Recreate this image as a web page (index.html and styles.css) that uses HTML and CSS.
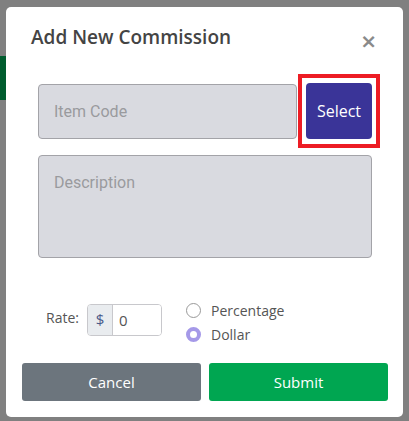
FILE: index.html
```html
<!DOCTYPE html>
<html lang="en">
<head>
    <meta charset="UTF-8">
    <meta name="viewport" content="width=device-width, initial-scale=1.0">
    <title>Add New Commission</title>
    <link rel="stylesheet" href="styles.css">
</head>
<body>
    <div class="backdrop">
        <div class="side-strip"></div>
        <div class="modal">
            <div class="modal-header">
                <h1>Add New Commission</h1>
                <span class="close">&times;</span>
            </div>
            <div class="modal-body">
                <div class="code-row">
                    <input type="text" class="field code-field" placeholder="Item Code">
                    <div class="highlight-box">
                        <button type="button" class="select-btn">Select</button>
                    </div>
                </div>
                <textarea class="field desc-field" placeholder="Description"></textarea>

                <div class="rate-row">
                    <label class="rate-label">Rate:</label>
                    <div class="input-group">
                        <span class="prefix">$</span>
                        <input type="text" class="rate-input" value="0">
                    </div>
                    <div class="radios">
                        <label class="radio"><span class="dot"></span>Percentage</label>
                        <label class="radio"><span class="dot checked"></span>Dollar</label>
                    </div>
                </div>
            </div>
            <div class="modal-footer">
                <button type="button" class="btn cancel">Cancel</button>
                <button type="button" class="btn submit">Submit</button>
            </div>
        </div>
    </div>
</body>
</html>
```

FILE: styles.css
```css
body {
    margin: 0;
    background-color: #808080;
    font-family: "Open Sans", "Liberation Sans", sans-serif;
}
.backdrop {
    position: relative;
    width: 409px;
    height: 421px;
    padding: 7px 6px 0 6px;
    box-sizing: border-box;
}
.side-strip {
    position: absolute;
    left: 0;
    top: 56px;
    width: 6px;
    height: 44px;
    background-color: #005c2e;
}
.modal {
    width: 397px;
    height: 410px;
    background-color: #fff;
    border-radius: 5px;
    box-sizing: border-box;
    display: flex;
    flex-direction: column;
}
.modal-header {
    display: flex;
    justify-content: space-between;
    padding: 17px 26px 0 25px;
    height: 67px;
    box-sizing: border-box;
}
h1 {
    margin: 0;
    font-size: 19px;
    font-weight: 600;
    color: #444;
}
.close {
    font-size: 20px;
    font-weight: bold;
    color: #8a8a8a;
    line-height: 20px;
    margin-top: 7px;
    font-family: "DejaVu Sans", sans-serif;
}
.modal-body {
    padding: 0 23px 0 32px;
}
.code-row {
    display: flex;
    align-items: center;
}
.field {
    background-color: #d9dae0;
    border: 1px solid #a3a3a8;
    border-radius: 4px;
    box-sizing: border-box;
    font-family: Roboto, sans-serif;
    font-size: 16px;
    padding: 0 15px;
    color: #444;
}
.field::placeholder {
    color: #9a9a9e;
}
.code-field {
    width: 259px;
    height: 55px;
    flex-shrink: 0;
}
.highlight-box {
    border: 4px solid #ed1c24;
    padding: 5px 4px;
    margin-left: 1px;
    flex-shrink: 0;
}
.select-btn {
    display: block;
    width: 66px;
    height: 56px;
    background-color: #3a3498;
    color: #fff;
    border: none;
    border-radius: 4px;
    font-family: "Open Sans", sans-serif;
    font-size: 16px;
}
.desc-field {
    display: block;
    width: 334px;
    height: 103px;
    margin-top: 7px;
    padding-top: 17px;
    resize: none;
}
.rate-row {
    display: flex;
    align-items: flex-start;
    margin-top: 43px;
    padding-left: 8px;
}
.rate-label {
    font-size: 14px;
    color: #555;
    margin-top: 7px;
    width: 41px;
}
.input-group {
    display: flex;
    height: 30px;
    border: 1px solid #c8c8cc;
    border-radius: 4px;
    overflow: hidden;
    margin-top: 3px;
}
.prefix {
    width: 24px;
    background-color: #e9ecef;
    border-right: 1px solid #c8c8cc;
    color: #4a5a8a;
    font-size: 15px;
    text-align: center;
    line-height: 29px;
}
.rate-input {
    width: 48px;
    box-sizing: border-box;
    border: none;
    padding: 0 6px;
    font-family: "Open Sans", sans-serif;
    font-size: 15px;
    color: #555;
    outline: none;
}
.radios {
    margin-left: 24px;
    margin-top: -2px;
    display: flex;
    flex-direction: column;
    gap: 2px;
}
.radio {
    display: flex;
    align-items: center;
    font-size: 14px;
    color: #555;
    height: 22px;
}
.dot {
    width: 13px;
    height: 13px;
    border: 1px solid #999;
    border-radius: 50%;
    margin-right: 10px;
}
.dot.checked {
    width: 7px;
    height: 7px;
    border: 4px solid #a599e8;
    background-color: #fff;
}
.modal-footer {
    display: flex;
    gap: 8px;
    padding: 0 15px 0 16px;
    margin-top: 18px;
}
.btn {
    flex: 1;
    height: 38px;
    border: none;
    border-radius: 3px;
    color: #fff;
    font-family: "Open Sans", sans-serif;
    font-size: 15px;
}
.cancel {
    background-color: #6c757d;
}
.submit {
    background-color: #00a651;
}
```
